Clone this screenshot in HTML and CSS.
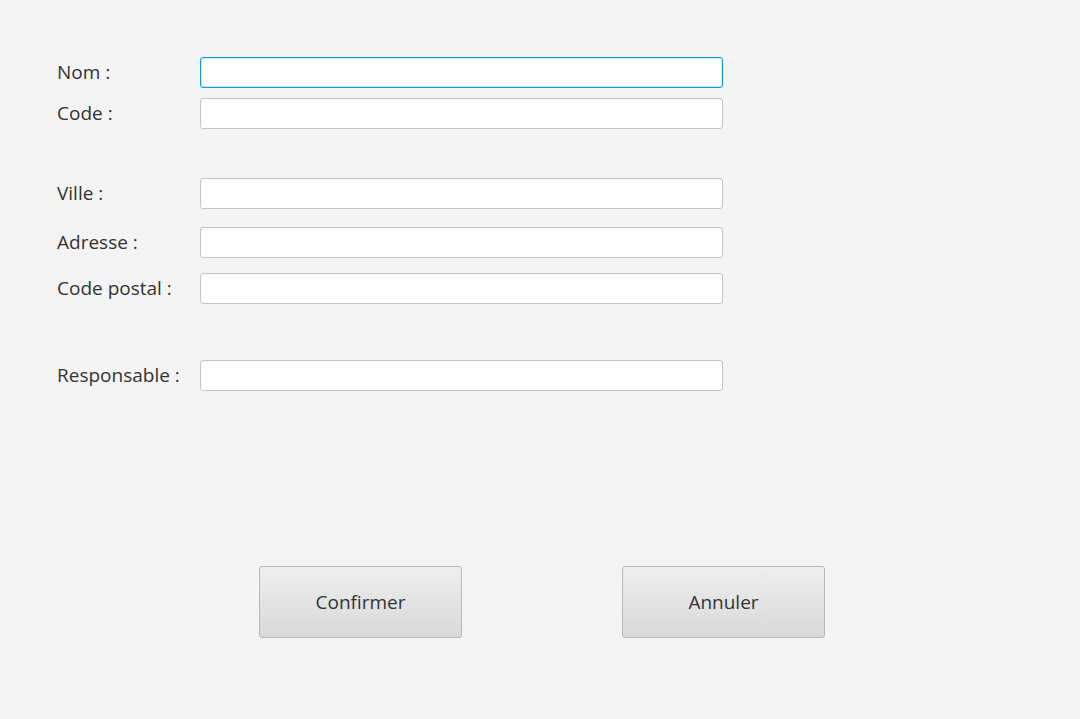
FILE: index.html
```html
<!DOCTYPE html>
<html lang="fr">
<head>
<meta charset="utf-8">
<link rel="stylesheet" href="styles.css">
</head>
<body>
<div class="form">
  <div class="row r-nom"><label class="lbl">Nom :</label><div class="field focused"></div></div>
  <div class="row r-code"><label class="lbl">Code :</label><div class="field"></div></div>
  <div class="row r-ville"><label class="lbl">Ville :</label><div class="field"></div></div>
  <div class="row r-adresse"><label class="lbl">Adresse :</label><div class="field"></div></div>
  <div class="row r-cp"><label class="lbl">Code postal :</label><div class="field"></div></div>
  <div class="row r-resp"><label class="lbl">Responsable :</label><div class="field"></div></div>
</div>
<div class="actions">
  <button class="btn">Confirmer</button>
  <button class="btn">Annuler</button>
</div>
</body>
</html>
```
FILE: styles.css
```css
html, body {
  margin: 0;
  padding: 0;
  background: #f4f4f4;
  width: 1080px;
  height: 719px;
  overflow: hidden;
  font-family: "Open Sans", "Noto Sans", sans-serif;
  color: #333333;
}
.form {
  display: flex;
  flex-direction: column;
  padding: 57px 0 0 57px;
}
.row {
  display: flex;
  align-items: center;
  height: 31px;
}
.r-code { margin-top: 10px; }
.r-ville { margin-top: 49px; }
.r-adresse { margin-top: 18px; }
.r-cp { margin-top: 15px; }
.r-resp { margin-top: 56px; }
.lbl {
  width: 143px;
  font-size: 19px;
  line-height: 31px;
  white-space: nowrap;
}
.field {
  box-sizing: border-box;
  width: 523px;
  height: 31px;
  background: linear-gradient(#f8f8f8, #ffffff 4px);
  border: 1px solid #c4c4c4;
  border-radius: 3px;
}
.field.focused {
  border-color: #0a9fd6;
  background: #ffffff;
  box-shadow: inset 0 0 0 1px #c9ebf7;
}
.actions {
  display: flex;
  gap: 160px;
  padding-left: 259px;
  margin-top: 175px;
}
.btn {
  box-sizing: border-box;
  width: 203px;
  height: 72px;
  border: 1px solid #b8b8b8;
  border-radius: 3px;
  background: linear-gradient(#eeeeee, #d9d9d9);
  font-family: "Open Sans", "Noto Sans", sans-serif;
  font-size: 19px;
  color: #333333;
  padding: 0;
}
```
